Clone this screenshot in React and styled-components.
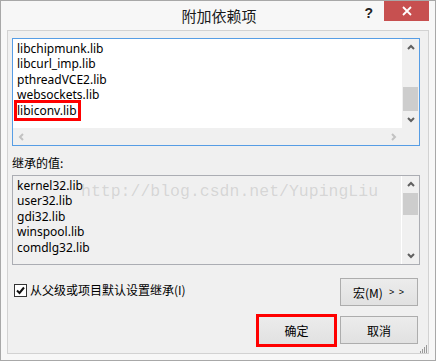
import styled, { createGlobalStyle } from "styled-components";

const GlobalStyle = createGlobalStyle`
  html, body {
    margin: 0;
    padding: 0;
    background: #ffffff;
  }
  body {
    font-family: "Noto Sans", "Noto Sans CJK SC", sans-serif;
  }
`;

const editable = ["libchipmunk.lib", "libcurl_imp.lib", "pthreadVCE2.lib", "websockets.lib", "libiconv.lib"];
const inherited = ["kernel32.lib", "user32.lib", "gdi32.lib", "winspool.lib", "comdlg32.lib"];

function Chevron({ dir, disabled }) {
  const pts = {
    up: "1,5 4,2 7,5",
    down: "1,2 4,5 7,2",
    left: "5,1 2,4 5,7",
    right: "2,1 5,4 2,7",
  }[dir];
  return (
    <svg width="8" height="8" viewBox="0 0 8 8">
      <polyline points={pts} fill="none" stroke={disabled ? "#c2c2c2" : "#606060"} strokeWidth="2" />
    </svg>
  );
}

export default function App() {
  return (
    <>
      <GlobalStyle />
      <Window>
        <TitleBar>
          <span />
          <Title>附加依赖项</Title>
          <TitleActions>
            <Help>?</Help>
            <CloseButton>
              <svg width="10" height="10" viewBox="0 0 10 10">
                <path d="M1 1 L9 9 M9 1 L1 9" stroke="#fff" strokeWidth="1.8" />
              </svg>
            </CloseButton>
          </TitleActions>
        </TitleBar>

        <Panel>
          <ListBox $focused>
            <ListBody>
              <ListArea $white>
                {editable.map((name) => (
                  <ListItem key={name} $marked={name === "libiconv.lib"}>
                    {name}
                  </ListItem>
                ))}
              </ListArea>
              <VScroll>
                <ArrowButton><Chevron dir="up" /></ArrowButton>
                <Track $end>
                  <Thumb $size={24} />
                </Track>
                <ArrowButton><Chevron dir="down" /></ArrowButton>
              </VScroll>
            </ListBody>
            <HScroll>
              <ArrowButton><Chevron dir="left" disabled /></ArrowButton>
              <Track />
              <ArrowButton><Chevron dir="right" disabled /></ArrowButton>
              <Corner />
            </HScroll>
          </ListBox>

          <FieldLabel>继承的值:</FieldLabel>

          <ListBox $height={90}>
            <ListBody>
              <ListArea $inset>
                {inherited.map((name) => (
                  <ListItem key={name}>{name}</ListItem>
                ))}
              </ListArea>
              <VScroll $divider>
                <ArrowButton><Chevron dir="up" /></ArrowButton>
                <Track>
                  <Thumb $size={22} />
                </Track>
                <ArrowButton><Chevron dir="down" /></ArrowButton>
              </VScroll>
            </ListBody>
          </ListBox>

          <OptionRow>
            <CheckLabel>
              <CheckBox>
                <svg width="11" height="11" viewBox="0 0 11 11">
                  <path d="M2 5.5 L4.5 8 L9 2.5" fill="none" stroke="#111" strokeWidth="2" />
                </svg>
              </CheckBox>
              从父级或项目默认设置继承(I)
            </CheckLabel>
            <Button>
              宏(M)<Small>&gt; &gt;</Small>
            </Button>
          </OptionRow>

          <ButtonRow>
            <Button $primary $marked>确定</Button>
            <Button>取消</Button>
          </ButtonRow>

          <Grip>
            <svg width="9" height="9" viewBox="0 0 9 9">
              {[[8, 1], [6, 3], [8, 3], [4, 5], [6, 5], [8, 5], [2, 7], [4, 7], [6, 7], [8, 7]].map(([x, y]) => (
                <rect key={`${x}-${y}`} x={x - 1} y={y} width="1" height="1" fill="#9a9a9a" />
              ))}
              {[[7, 2], [5, 4], [7, 4], [3, 6], [5, 6], [7, 6], [1, 8], [3, 8], [5, 8], [7, 8]].map(([x, y]) => (
                <rect key={`b${x}-${y}`} x={x} y={y} width="1" height="1" fill="#9a9a9a" />
              ))}
            </svg>
          </Grip>
        </Panel>

        <Watermark>http://blog.csdn.net/YupingLiu</Watermark>
      </Window>
    </>
  );
}

const Window = styled.div`
  position: relative;
  width: 436px;
  height: 361px;
  box-sizing: border-box;
  border: 1px solid #a8a8a8;
  background: #f7f7f7;
  display: flex;
  flex-direction: column;
  overflow: hidden;
`;

const TitleBar = styled.div`
  height: 29px;
  flex-shrink: 0;
  display: grid;
  grid-template-columns: 1fr auto 1fr;
`;

const Title = styled.div`
  font-family: "Noto Sans CJK SC", sans-serif;
  font-size: 15px;
  line-height: 29px;
  color: #1a1a1a;
  padding-left: 2px;
`;

const TitleActions = styled.div`
  display: flex;
  justify-content: flex-end;
  align-items: flex-start;
  margin-right: 6px;
`;

const Help = styled.div`
  font-family: "Liberation Sans", sans-serif;
  font-weight: bold;
  font-size: 14px;
  line-height: 24px;
  color: #222;
  margin-right: 11px;
`;

const CloseButton = styled.div`
  width: 45px;
  height: 20px;
  background: #c75050;
  display: flex;
  align-items: center;
  justify-content: center;
`;

const Panel = styled.div`
  position: relative;
  flex: 1;
  margin: 0 6px 6px 6px;
  border: 1px solid #d2d2d2;
  background: #f0f0f0;
  padding: 7px 8px 0 4px;
  display: flex;
  flex-direction: column;
`;

const ListBox = styled.div`
  height: ${(p) => p.$height || 108}px;
  box-sizing: border-box;
  border: 1px solid ${(p) => (p.$focused ? "#569de5" : "#abadb3")};
  background: ${(p) => (p.$focused ? "#ffffff" : "#f0f0f0")};
  display: flex;
  flex-direction: column;
  flex-shrink: 0;
`;

const ListBody = styled.div`
  flex: 1;
  display: flex;
  min-height: 0;
`;

const ListArea = styled.div`
  flex: 1;
  padding: ${(p) => (p.$inset ? "2px 4px" : "2px 4px")};
  background: ${(p) => (p.$white ? "#ffffff" : "#f0f0f0")};
  font-family: "Noto Sans", sans-serif;
  font-size: 12px;
  line-height: 15.4px;
  color: #000;
  overflow: hidden;
`;

const ListItem = styled.div`
  width: fit-content;
  outline: ${(p) => (p.$marked ? "3px solid #ff0000" : "none")};
  outline-offset: 0;
  padding: 0 1px 0 0;
`;

const VScroll = styled.div`
  width: 17px;
  display: flex;
  flex-direction: column;
  background: #f0f0f0;
  border-left: ${(p) => (p.$divider ? "1px solid #ffffff" : "none")};
`;

const HScroll = styled.div`
  height: 17px;
  display: flex;
  background: #f0f0f0;
`;

const ArrowButton = styled.div`
  width: 17px;
  height: 17px;
  flex-shrink: 0;
  display: flex;
  align-items: center;
  justify-content: center;
`;

const Track = styled.div`
  flex: 1;
  display: flex;
  flex-direction: column;
  justify-content: ${(p) => (p.$end ? "flex-end" : "flex-start")};
`;

const Thumb = styled.div`
  height: ${(p) => p.$size}px;
  margin: 0 1px;
  background: #cdcdcd;
`;

const Corner = styled.div`
  width: 17px;
`;

const FieldLabel = styled.div`
  font-family: "Noto Sans CJK SC", sans-serif;
  font-size: 12px;
  line-height: 16px;
  color: #000;
  padding-top: 9px;
  margin-bottom: 4px;
`;

const OptionRow = styled.div`
  margin-top: 13px;
  margin-right: 2px;
  display: flex;
  justify-content: space-between;
  align-items: flex-start;
`;

const CheckLabel = styled.div`
  display: flex;
  align-items: center;
  gap: 3px;
  margin-top: 4px;
  margin-left: 2px;
  font-family: "Noto Sans CJK SC", sans-serif;
  font-size: 12px;
  line-height: 16px;
  color: #000;
`;

const CheckBox = styled.div`
  width: 13px;
  height: 13px;
  box-sizing: border-box;
  border: 1px solid #333;
  background: #fff;
  display: flex;
  align-items: center;
  justify-content: center;
`;

const ButtonRow = styled.div`
  margin-top: 10px;
  margin-right: 2px;
  display: flex;
  justify-content: flex-end;
  gap: 5px;
`;

const Button = styled.div`
  width: ${(p) => (p.$primary ? 77 : 78)}px;
  height: ${(p) => (p.$primary ? 29 : 28)}px;
  box-sizing: border-box;
  border: 1px solid ${(p) => (p.$primary ? "#3c7fb1" : "#adadad")};
  background: linear-gradient(#ececec, #e1e1e1);
  display: flex;
  align-items: center;
  justify-content: center;
  font-family: "Noto Sans CJK SC", sans-serif;
  font-size: 12px;
  color: #000;
  outline: ${(p) => (p.$marked ? "3px solid #ff0000" : "none")};
  outline-offset: -1px;
`;

const Small = styled.span`
  font-family: "Liberation Sans", sans-serif;
  font-size: 9px;
  margin-left: 6px;
  letter-spacing: 1px;
`;

const Grip = styled.div`
  position: absolute;
  right: 0;
  bottom: 0;
  width: 9px;
  height: 9px;
  line-height: 0;
`;

const Watermark = styled.div`
  position: absolute;
  left: 80px;
  top: 181px;
  font-family: "Liberation Mono", "DejaVu Sans Mono", monospace;
  font-size: 16.5px;
  line-height: 20px;
  color: rgba(150, 150, 150, 0.3);
  white-space: nowrap;
  pointer-events: none;
`;
